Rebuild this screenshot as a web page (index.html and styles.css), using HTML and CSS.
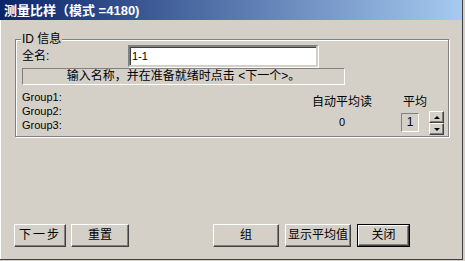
FILE: index.html
```html
<!DOCTYPE html>
<html>
<head>
<meta charset="utf-8">
<link rel="stylesheet" href="styles.css">
</head>
<body>
<div class="window">
  <div class="titlebar">测量比样（模式 =4180)</div>
  <div class="content">
    <div class="groupbox">
      <span class="legend">ID 信息</span>
      <div class="row-name">
        <span class="name-label">全名:</span>
        <div class="input">1-1</div>
      </div>
      <div class="status">输入名称，并在准备就绪时点击 &lt;下一个&gt;。</div>
      <div class="lower">
        <div class="groups">
          <div class="gline">Group1:</div>
          <div class="gline">Group2:</div>
          <div class="gline">Group3:</div>
        </div>
        <div class="auto-col">
          <div class="auto-label">自动平均读</div>
          <div class="auto-value">0</div>
        </div>
        <div class="avg-col">
          <div class="avg-label">平均</div>
          <div class="avg-box">1</div>
        </div>
        <div class="spinner">
          <div class="spin-btn"><span class="arrow-up"></span></div>
          <div class="spin-btn"><span class="arrow-down"></span></div>
        </div>
      </div>
    </div>
    <div class="buttons">
      <div class="btn btn-next">下一步</div>
      <div class="btn btn-reset">重置</div>
      <div class="btn btn-group">组</div>
      <div class="btn btn-show">显示平均值</div>
      <div class="btn-default"><div class="btn btn-close">关闭</div></div>
    </div>
  </div>
</div>
</body>
</html>
```

FILE: styles.css
```css
html, body {
  margin: 0;
  padding: 0;
  background: #d4d0c8;
}
body {
  font-family: "Liberation Sans", "Noto Sans CJK SC", sans-serif;
  font-size: 12px;
  color: #000;
}
.window {
  width: 462px;
  height: 259px;
  background: #d4d0c8;
  border-right: 1px solid #404040;
  border-bottom: 1px solid #404040;
  display: flex;
  flex-direction: column;
  box-shadow: inset 1px 0 0 #fff;
}
.titlebar {
  height: 20px;
  line-height: 21px;
  padding-left: 4px;
  color: #fff;
  font-weight: bold;
  font-size: 13px;
  background: linear-gradient(to right, #0a246a, #a6caf0);
  box-sizing: border-box;
  white-space: nowrap;
}
.content {
  flex: 1;
  display: flex;
  flex-direction: column;
  padding-bottom: 12px;
}
.groupbox {
  position: relative;
  margin: 19px 0 0 15px;
  width: 434px;
  height: 98px;
  box-sizing: border-box;
  border: 1px solid #808080;
  box-shadow: 1px 1px 0 #fff, inset 1px 1px 0 #fff;
  padding: 5px 4px 0 6px;
}
.legend {
  position: absolute;
  left: 5px;
  top: -8px;
  padding: 0 1px;
  line-height: 14px;
  background: #d4d0c8;
}
.row-name {
  display: flex;
  align-items: center;
  height: 22px;
}
.name-label {
  width: 106px;
  line-height: 14px;
}
.input {
  width: 190px;
  height: 22px;
  box-sizing: border-box;
  background: #fff;
  border-style: solid;
  border-width: 2px;
  border-color: #808080 #d4d0c8 #d4d0c8 #808080;
  box-shadow: inset 1px 1px 0 #404040, 1px 1px 0 #fff;
  padding: 0 2px;
  line-height: 18px;
  font-size: 11px;
}
.status {
  margin-top: 1px;
  width: 323px;
  height: 17px;
  box-sizing: border-box;
  border: 1px solid;
  border-color: #808080 #fff #fff #808080;
  text-align: center;
  line-height: 15px;
  white-space: nowrap;
}
.lower {
  display: flex;
  align-items: flex-start;
}
.groups {
  flex: 1;
  padding-top: 5px;
  font-size: 11px;
}
.gline {
  line-height: 14px;
}
.auto-col {
  width: 60px;
  text-align: center;
}
.auto-label {
  margin-top: 10px;
  line-height: 14px;
  white-space: nowrap;
}
.auto-value {
  margin-top: 6px;
  line-height: 14px;
  font-size: 11px;
}
.avg-col {
  margin-left: 27px;
  width: 30px;
}
.avg-label {
  margin-top: 10px;
  line-height: 14px;
  padding-left: 4px;
}
.avg-box {
  margin-top: 4px;
  margin-left: 2px;
  width: 18px;
  height: 19px;
  box-sizing: border-box;
  border: 1px solid;
  border-color: #808080 #fff #fff #808080;
  text-align: center;
  line-height: 17px;
  font-size: 12px;
}
.spinner {
  margin-top: 26px;
  width: 15px;
  display: flex;
  flex-direction: column;
}
.spin-btn {
  height: 12px;
  box-sizing: border-box;
  border: 1px solid;
  border-color: #fff #404040 #404040 #fff;
  box-shadow: inset -1px -1px 0 #808080;
  display: flex;
  align-items: center;
  justify-content: center;
}
.arrow-up {
  width: 0;
  height: 0;
  border-left: 3px solid transparent;
  border-right: 3px solid transparent;
  border-bottom: 3px solid #000;
}
.arrow-down {
  width: 0;
  height: 0;
  border-left: 3px solid transparent;
  border-right: 3px solid transparent;
  border-top: 3px solid #000;
}
.buttons {
  margin-top: auto;
  margin-left: 14px;
  display: flex;
  align-items: flex-start;
}
.btn {
  height: 23px;
  box-sizing: border-box;
  border: 1px solid;
  border-color: #fff #404040 #404040 #fff;
  box-shadow: inset -1px -1px 0 #808080;
  text-align: center;
  line-height: 21px;
  white-space: nowrap;
  overflow: hidden;
}
.btn-next { width: 52px; letter-spacing: 2px; }
.btn-reset { width: 58px; margin-left: 5px; }
.btn-group { width: 66px; margin-left: 84px; }
.btn-show { width: 66px; margin-left: 6px; text-align: left; padding-left: 2px; letter-spacing: 0; }
.btn-default {
  margin-left: 6px;
  border: 1px solid #000;
}
.btn-close { width: 51px; height: 21px; line-height: 19px; }
```
